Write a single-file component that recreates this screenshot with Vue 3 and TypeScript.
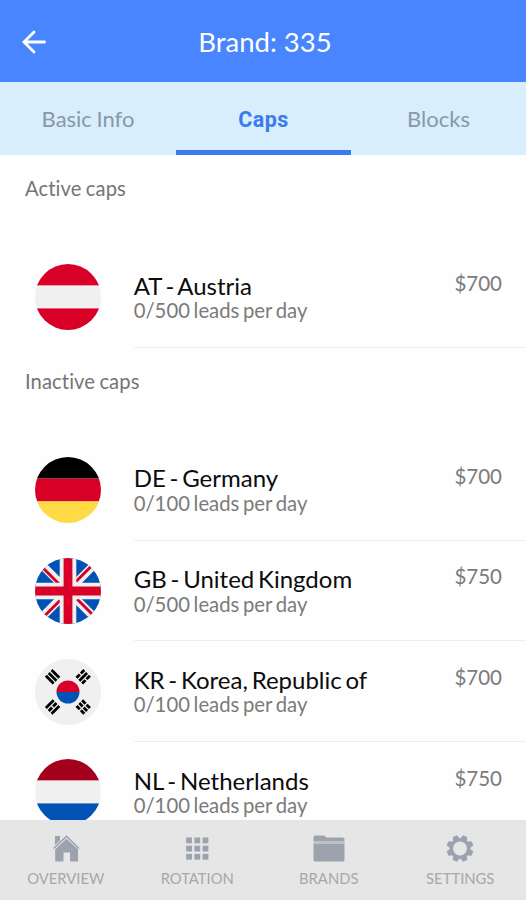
<script setup lang="ts">
import { ref } from 'vue'

type Code = 'AT' | 'DE' | 'GB' | 'KR' | 'NL'
interface Cap { code: Code; country: string; limit: number; price: number }
interface Section { title: string; caps: Cap[] }

const tabs = ['Basic Info', 'Caps', 'Blocks']
const activeTab = ref('Caps')

const sections: Section[] = [
  { title: 'Active caps', caps: [{ code: 'AT', country: 'Austria', limit: 500, price: 700 }] },
  {
    title: 'Inactive caps',
    caps: [
      { code: 'DE', country: 'Germany', limit: 100, price: 700 },
      { code: 'GB', country: 'United Kingdom', limit: 500, price: 750 },
      { code: 'KR', country: 'Korea, Republic of', limit: 100, price: 700 },
      { code: 'NL', country: 'Netherlands', limit: 100, price: 750 },
    ],
  },
]

const stripes: Partial<Record<Code, string[]>> = {
  AT: ['#d80027', '#f0f0f0', '#d80027'],
  DE: ['#000000', '#d80027', '#ffda44'],
  NL: ['#a2001d', '#f0f0f0', '#0052b4'],
}

// Trigrams of the Korean flag: rotation and whether each bar is broken
const trigrams = [
  { x: 17.6, y: 17.8, angle: 45, broken: [false, false, false] },
  { x: 48.2, y: 17.8, angle: -45, broken: [true, false, true] },
  { x: 17.6, y: 48, angle: -45, broken: [false, true, false] },
  { x: 48.2, y: 48, angle: 45, broken: [true, true, true] },
]

const nav = ['overview', 'rotation', 'brands', 'settings']
const teeth = [0, 45, 90, 135, 180, 225, 270, 315]
</script>

<template>
  <div class="screen">
    <header class="header">
      <button class="back" aria-label="Back">
        <svg width="26" height="26" viewBox="0 0 26 26" fill="none" stroke="#fff" stroke-width="2.8" stroke-linecap="round">
          <path d="M13 3 3 13l10 10M3 13h20.5" />
        </svg>
      </button>
      <h1 class="title">Brand: 335</h1>
    </header>

    <nav class="tabs">
      <button
        v-for="tab in tabs"
        :key="tab"
        class="tab"
        :class="{ active: tab === activeTab }"
        @click="activeTab = tab"
      >{{ tab }}</button>
    </nav>

    <main class="content">
      <section v-for="section in sections" :key="section.title">
        <h2 class="section-title">{{ section.title }}</h2>
        <article v-for="cap in section.caps" :key="cap.code" class="row">
          <svg class="flag" viewBox="0 0 66 66">
            <clipPath :id="`disc-${cap.code}`"><circle cx="33" cy="33" r="33" /></clipPath>
            <g :clip-path="`url(#disc-${cap.code})`">
              <template v-if="stripes[cap.code]">
                <rect
                  v-for="(color, i) in stripes[cap.code]"
                  :key="i"
                  x="0"
                  :y="[0, 21.6, 44.4][i]"
                  width="66"
                  :height="[21.6, 22.8, 21.6][i]"
                  :fill="color"
                />
              </template>
              <template v-else-if="cap.code === 'GB'">
                <rect width="66" height="66" fill="#0052b4" />
                <path d="M0 0 66 66M66 0 0 66" stroke="#f0f0f0" stroke-width="8.2" />
                <path d="M6.5 8.5 24 26M41 23.5 57 7.5M42 41 59 58M25 42.5 9 58.5" stroke="#d80027" stroke-width="3" />
                <path d="M33 0v66M0 33h66" stroke="#f0f0f0" stroke-width="16.6" />
                <path d="M33 0v66M0 33h66" stroke="#d80027" stroke-width="8.8" />
              </template>
              <template v-else>
                <rect width="66" height="66" fill="#f0f0f0" />
                <path d="M21.5 33a11.5 11.5 0 0 1 23 0z" fill="#d80027" />
                <path d="M21.5 33a11.5 11.5 0 0 0 23 0z" fill="#0052b4" />
                <g
                  v-for="(t, i) in trigrams"
                  :key="i"
                  :transform="`translate(${t.x} ${t.y}) rotate(${t.angle})`"
                  stroke="#000"
                  stroke-width="2.8"
                >
                  <path
                    v-for="(broken, n) in t.broken"
                    :key="n"
                    :d="broken ? 'M-5.5 0h4.8M.7 0h4.8' : 'M-5.5 0h11'"
                    :transform="`translate(0 ${(n - 1) * 4})`"
                  />
                </g>
              </template>
            </g>
          </svg>
          <div class="details">
            <div class="text">
              <h3 class="name">{{ cap.code }} - {{ cap.country }}</h3>
              <p class="usage">0/{{ cap.limit }} leads per day</p>
            </div>
            <span class="price">${{ cap.price }}</span>
          </div>
        </article>
      </section>
    </main>

    <footer class="bottom">
      <a v-for="item in nav" :key="item" class="nav-item">
        <svg width="34" height="28" viewBox="0 0 34 28" fill="#9ca3af">
          <template v-if="item === 'overview'">
            <path d="M6 2h5v4.5l-5 4.5z" />
            <path d="M4.5 14.5 17.5 2.3 30 14.5" fill="none" stroke="#9ca3af" stroke-width="1.6" />
            <path d="M17.5 4.8 29 15.3V27.5h-8v-9h-6.5v9H6.2V15.3z" />
          </template>
          <template v-else-if="item === 'rotation'">
            <template v-for="r in 3" :key="r">
              <rect v-for="c in 3" :key="c" :x="c * 8.2 - 2" :y="r * 8.2 - 4.7" width="5.8" height="5.8" />
            </template>
          </template>
          <template v-else-if="item === 'brands'">
            <path d="M1.5 3q0-1.500 1.5-1.500h8.5q1.500 0 2 1l.6 1h16.400q2 0 2 2V7h-31z" />
            <path d="M1.5 7h31v3h-31z" opacity=".55" />
            <path d="M1.5 10h31v16q0 1.500-1.500 1.500h-28q-1.500 0-1.500-1.500z" />
          </template>
          <template v-else>
            <circle cx="17" cy="14.5" r="8.7" fill="none" stroke="#9ca3af" stroke-width="3.6" />
            <path v-for="a in teeth" :key="a" d="M13.500 5.500 14.700 1h4.600l1.200 4.500z" :transform="`rotate(${a + 22.5} 17 14.5)`" />
          </template>
        </svg>
        <span class="nav-label">{{ item.toUpperCase() }}</span>
      </a>
    </footer>
  </div>
</template>

<style>
body { margin: 0; overflow: hidden; }
</style>

<style scoped>
.screen {
  display: flex;
  flex-direction: column;
  height: 900px;
  overflow: hidden;
  background: #fefefe;
  font-family: Lato, "Liberation Sans", sans-serif;
  font-variant-ligatures: none;
}
h1, h2, h3, p { margin: 0; font-weight: 400; }
button { padding: 0; border: 0; background: none; font: inherit; }
.header {
  display: grid;
  grid-template-columns: 60px 1fr 60px;
  align-items: center;
  flex: none;
  height: 82px;
  padding-top: 2px;
  box-sizing: border-box;
  background: #4885ff;
  color: #fff;
}
.back { display: flex; padding-left: 21px; }
.title { margin-left: 4px; font-size: 27.5px; line-height: 34px; text-align: center; }
.tabs {
  display: grid;
  grid-template-columns: 176px 175px 175px;
  flex: none;
  height: 73px;
  background: #d8eefd;
}
.tab {
  box-sizing: border-box;
  border-bottom: 5px solid transparent;
  padding-top: 5px;
  font-size: 22px;
  word-spacing: -1px;
  color: #8799a7;
}
.tab.active {
  padding-top: 6px;
  border-color: #387bed;
  color: #387bed;
  font-family: Roboto, sans-serif;
  font-weight: 700;
  font-size: 21.5px;
  letter-spacing: 0.4px;
}
.content { flex: 1; min-height: 0; overflow: hidden; }
.section-title {
  box-sizing: border-box;
  height: 92px;
  padding: 19px 25px 0;
  font-size: 20.2px;
  line-height: 28px;
  letter-spacing: 0.1px;
  word-spacing: -1px;
  color: #757575;
}
.row { display: flex; height: 100.8px; }
.flag { flex: none; width: 66px; height: 66px; margin: 17.3px 33px 0 34.7px; }
.details {
  display: flex;
  justify-content: space-between;
  flex: 1;
  box-sizing: border-box;
  padding-right: 24px;
  border-bottom: 1px solid #eeeeee;
}
.text { padding-top: 25.5px; }
.name { font-size: 24px; line-height: 26px; word-spacing: -2.4px; color: #0c0c0c; white-space: nowrap; }
.usage { margin-top: -0.5px; font-size: 20.3px; line-height: 24px; word-spacing: -1.5px; color: #7b7b7b; }
.price { padding-top: 22.8px; font-size: 20.5px; line-height: 26px; color: #7b7b7b; }
.bottom {
  display: grid;
  grid-template-columns: repeat(4, 1fr);
  flex: none;
  height: 80px;
  background: #e6e6e6;
}
.nav-item { display: flex; flex-direction: column; align-items: center; padding-top: 14px; }
.nav-label { margin-top: 6.5px; font-size: 14.8px; line-height: 18px; color: #a5a8ac; }
</style>
